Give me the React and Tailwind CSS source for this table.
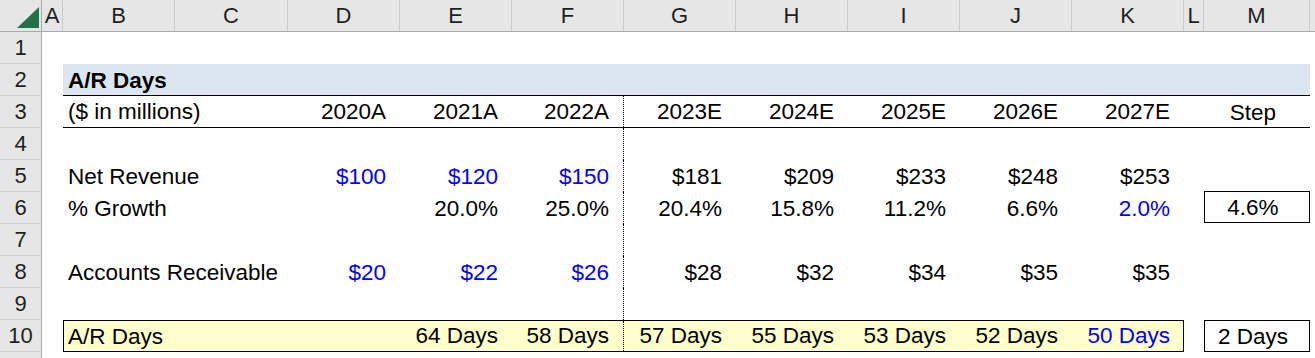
import React from 'react';

const LETTERS = [
  { k: 'A', w: 'w-[21px]' },
  { k: 'B', w: 'w-[112px]' },
  { k: 'C', w: 'w-[113px]' },
  { k: 'D', w: 'w-[112px]' },
  { k: 'E', w: 'w-[112px]' },
  { k: 'F', w: 'w-[112px]' },
  { k: 'G', w: 'w-[112px]' },
  { k: 'H', w: 'w-[112px]' },
  { k: 'I', w: 'w-[112px]' },
  { k: 'J', w: 'w-[112px]' },
  { k: 'K', w: 'w-[112px]' },
  { k: 'L', w: 'w-[20px]' },
  { k: 'M', w: 'w-[106px]' },
];

const years = ['2020A', '2021A', '2022A', '2023E', '2024E', '2025E', '2026E', '2027E'];

const revenue = [
  { t: '$100', blue: true },
  { t: '$120', blue: true },
  { t: '$150', blue: true },
  { t: '$181' },
  { t: '$209' },
  { t: '$233' },
  { t: '$248' },
  { t: '$253' },
];

const growth = [
  { t: '' },
  { t: '20.0%' },
  { t: '25.0%' },
  { t: '20.4%' },
  { t: '15.8%' },
  { t: '11.2%' },
  { t: '6.6%' },
  { t: '2.0%', blue: true },
];

const receivables = [
  { t: '$20', blue: true },
  { t: '$22', blue: true },
  { t: '$26', blue: true },
  { t: '$28' },
  { t: '$32' },
  { t: '$34' },
  { t: '$35' },
  { t: '$35' },
];

const arDays = [
  { t: '' },
  { t: '64 Days' },
  { t: '58 Days' },
  { t: '57 Days' },
  { t: '55 Days' },
  { t: '53 Days' },
  { t: '52 Days' },
  { t: '50 Days', blue: true },
];

const RowNum = ({ n }) => (
  <div className="w-[42px] shrink-0 h-8 bg-[#e6e6e6] border-r border-r-[#a9a9a9] border-b border-b-[#cfcfcf] flex items-center justify-center text-[22px] text-[#1f1f1f]">
    {n}
  </div>
);

// a year column cell (D..K), numbers hug the right edge like Excel
const Num = ({ cell, idx, extra = '' }) => (
  <div
    className={`w-[112px] shrink-0 h-full flex items-end justify-end pr-[14px] pb-[2px] whitespace-nowrap ${
      idx === 2 ? 'border-r border-dotted border-r-black' : ''
    } ${cell.blue ? 'text-[#0000ff]' : 'text-black'} ${extra}`}
  >
    {cell.t}
  </div>
);

const Label = ({ children, bold }) => (
  <div className={`w-[225px] shrink-0 h-full flex items-end pl-[5px] pb-[2px] whitespace-nowrap ${bold ? 'font-bold' : ''}`}>
    {children}
  </div>
);

const Row = ({ n, children }) => (
  <div className="flex h-8">
    <RowNum n={n} />
    <div className="w-[21px] shrink-0" />
    {children}
  </div>
);

const DataRow = ({ n, label, cells }) => (
  <Row n={n}>
    <Label>{label}</Label>
    {cells.map((c, i) => (
      <Num key={i} cell={c} idx={i} />
    ))}
  </Row>
);

const EmptyRow = ({ n }) => (
  <Row n={n}>
    <div className="w-[225px] shrink-0" />
    {years.map((y, i) => (
      <Num key={i} cell={{ t: '' }} idx={i} />
    ))}
  </Row>
);

export default function App() {
  return (
    <div className="w-[1315px] h-[358px] overflow-hidden bg-white text-black font-['Liberation_Sans',Arial,sans-serif] text-[22.5px] leading-[26px]">
      {/* column letters */}
      <div className="flex h-8 bg-[#e6e6e6] border-b border-b-[#ababab]">
        <div className="w-[42px] shrink-0 border-r border-r-[#a9a9a9] relative">
          <svg className="absolute left-[17px] top-[7px]" width="22" height="21" viewBox="0 0 22 21">
            <polygon points="22,0 22,21 0,21" fill="#217346" />
          </svg>
        </div>
        {LETTERS.map((c) => (
          <div
            key={c.k}
            className={`${c.w} shrink-0 border-r border-r-[#c9c9c9] flex items-center justify-center text-[22px] text-[#1f1f1f]`}
          >
            {c.k}
          </div>
        ))}
        <div className="flex-1" />
      </div>

      <Row n={1} />

      <Row n={2}>
        <div className="w-[1247px] shrink-0 h-full bg-[#dce6f1] border-b border-b-black flex items-end pl-[5px] pb-[1px] font-bold">
          A/R Days
        </div>
      </Row>

      <Row n={3}>
        <div className="flex w-[1247px] shrink-0 h-full border-b border-b-black">
          <Label>($ in millions)</Label>
          {years.map((y, i) => (
            <Num key={y} cell={{ t: y }} idx={i} extra="pb-[1px]" />
          ))}
          <div className="w-[20px] shrink-0" />
          <div className="w-[106px] shrink-0 flex items-end justify-center pr-[8px] pb-[1px]">Step</div>
        </div>
      </Row>

      <EmptyRow n={4} />
      <DataRow n={5} label="Net Revenue" cells={revenue} />

      <Row n={6}>
        <Label>% Growth</Label>
        {growth.map((c, i) => (
          <Num key={i} cell={c} idx={i} />
        ))}
        <div className="w-[20px] shrink-0" />
        <div className="w-[106px] shrink-0 h-full -mt-px border border-black flex items-end justify-center pr-[8px] pb-[1px]">
          4.6%
        </div>
      </Row>

      <EmptyRow n={7} />
      <DataRow n={8} label="Accounts Receivable" cells={receivables} />
      <EmptyRow n={9} />

      <Row n={10}>
        <div className="flex w-[1121px] shrink-0 h-full bg-[#ffffcc] border border-black">
          <div className="w-[224px] shrink-0 h-full flex items-end pl-[4px] pb-[1px] whitespace-nowrap">A/R Days</div>
          {arDays.map((c, i) => (
            <Num key={i} cell={c} idx={i} extra={i === 7 ? 'w-[111px] pr-[13px] pb-[1px]' : 'pb-[1px]'} />
          ))}
        </div>
        <div className="w-[20px] shrink-0" />
        <div className="w-[106px] shrink-0 h-full border border-black flex items-end justify-center pr-[8px] pb-[1px]">
          2 Days
        </div>
      </Row>

      <Row n="" />
    </div>
  );
}
